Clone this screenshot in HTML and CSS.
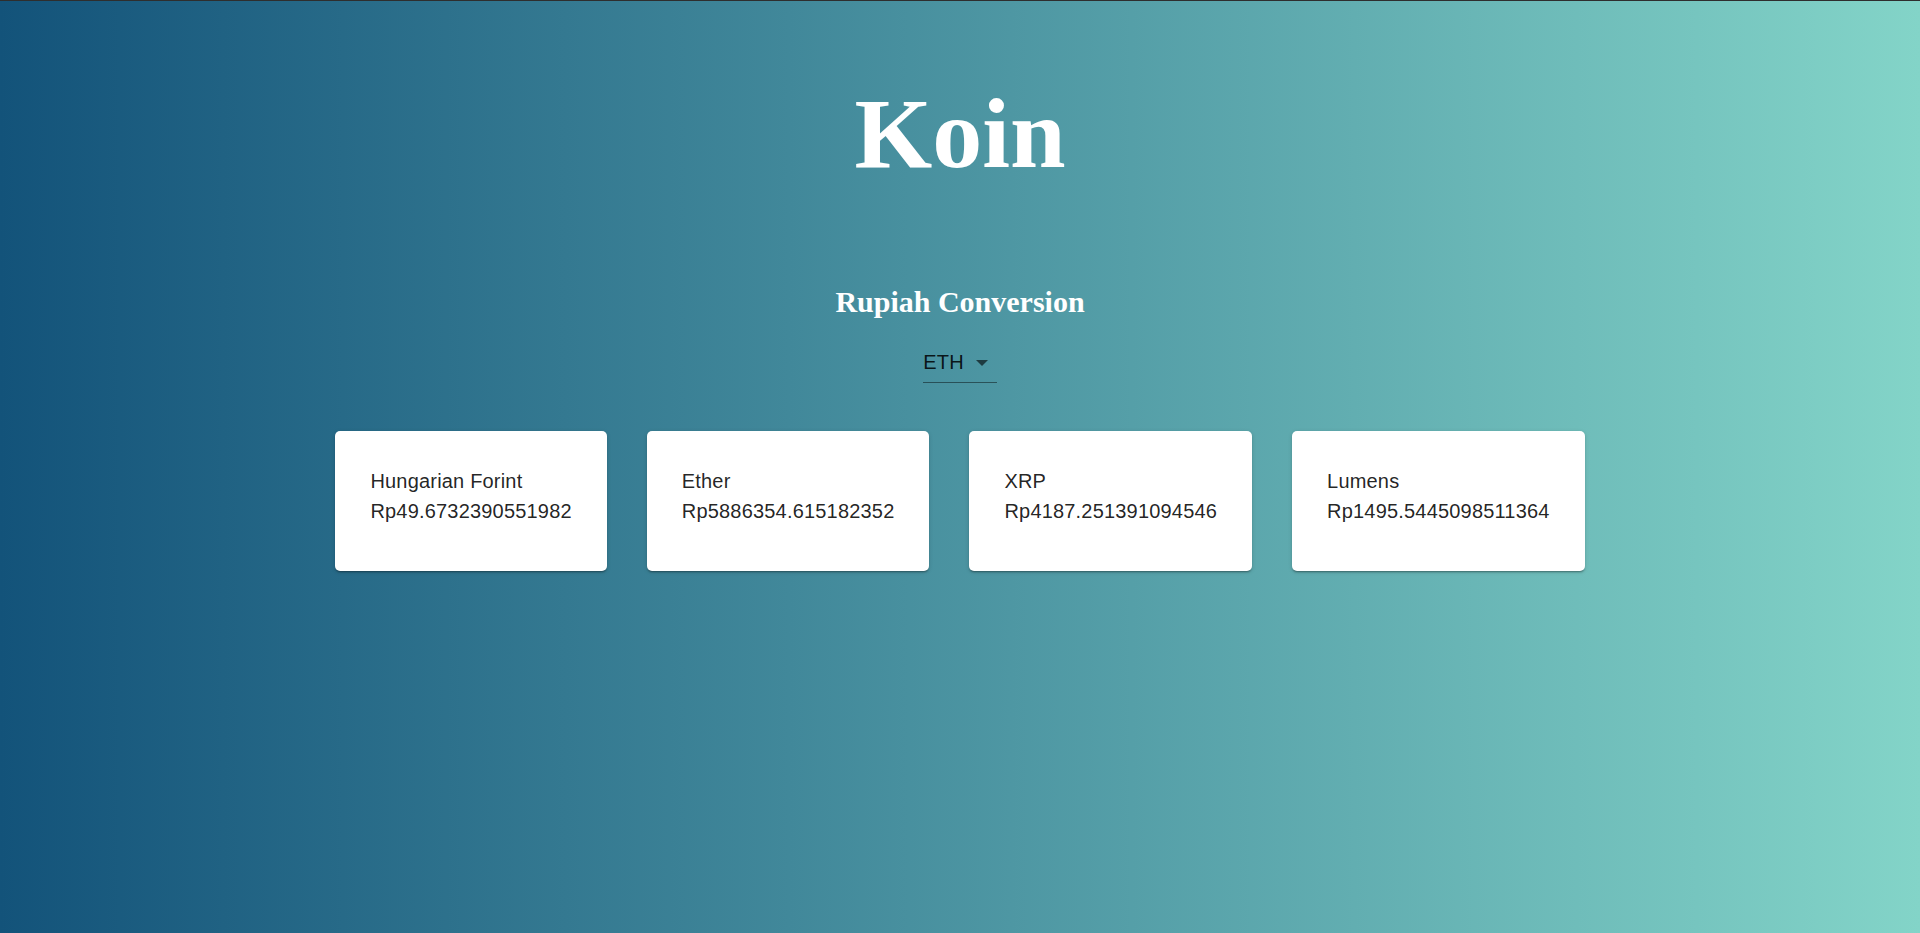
FILE: index.html
```html
<!DOCTYPE html>
<html lang="en">
<head>
<meta charset="utf-8">
<title>Koin</title>
<link rel="stylesheet" href="styles.css">
</head>
<body>
<div class="topline"></div>
<main class="page">
  <h1 class="title">Koin</h1>
  <h2 class="subtitle">Rupiah Conversion</h2>
  <div class="select">
    <span class="select-value">ETH</span>
    <span class="select-arrow"></span>
  </div>
  <section class="cards">
    <div class="card">
      <div class="card-line">Hungarian Forint</div>
      <div class="card-line">Rp49.6732390551982</div>
    </div>
    <div class="card">
      <div class="card-line">Ether</div>
      <div class="card-line">Rp5886354.615182352</div>
    </div>
    <div class="card">
      <div class="card-line">XRP</div>
      <div class="card-line">Rp4187.251391094546</div>
    </div>
    <div class="card">
      <div class="card-line">Lumens</div>
      <div class="card-line">Rp1495.5445098511364</div>
    </div>
  </section>
</main>
</body>
</html>
```

FILE: styles.css
```css
html, body {
  margin: 0;
  padding: 0;
}
body {
  min-height: 933px;
  background: linear-gradient(to right, #13537a 0%, #83d4c8 100%);
  font-family: "Liberation Sans", Arial, Helvetica, sans-serif;
}
.topline {
  height: 1px;
  background: #2e2e2e;
}
.page {
  display: flex;
  flex-direction: column;
  align-items: center;
}
.title {
  margin: 83px 0 0;
  font-family: "Liberation Serif", "Times New Roman", serif;
  font-weight: bold;
  font-size: 100px;
  line-height: 100px;
  color: #fff;
}
.subtitle {
  margin: 103px 0 0;
  font-family: "Liberation Serif", "Times New Roman", serif;
  font-weight: bold;
  font-size: 30px;
  line-height: 30px;
  color: #fff;
}
.select {
  margin-top: 33px;
  display: flex;
  align-items: center;
  padding: 0 9px 8px 0;
  border-bottom: 1px solid rgba(0, 0, 0, 0.45);
  color: rgba(0, 0, 0, 0.87);
  font-size: 20px;
  line-height: 24px;
  letter-spacing: 0.00938em;
}
.select-value {
  display: block;
}
.select-arrow {
  margin-left: 12px;
  margin-top: 2px;
  width: 0;
  height: 0;
  border-left: 6px solid transparent;
  border-right: 6px solid transparent;
  border-top: 6px solid rgba(0, 0, 0, 0.6);
}
.cards {
  margin-top: 48px;
  display: flex;
  gap: 40px;
}
.card {
  background: #fff;
  border-radius: 5px;
  padding: 35px 35px 45px;
  box-shadow: 0 2px 2px -1px rgba(0, 0, 0, 0.35), 0 1px 4px rgba(0, 0, 0, 0.15);
  color: rgba(0, 0, 0, 0.87);
  font-size: 20px;
  line-height: 30px;
  letter-spacing: 0.00938em;
}
.card-line {
  white-space: nowrap;
}
```
